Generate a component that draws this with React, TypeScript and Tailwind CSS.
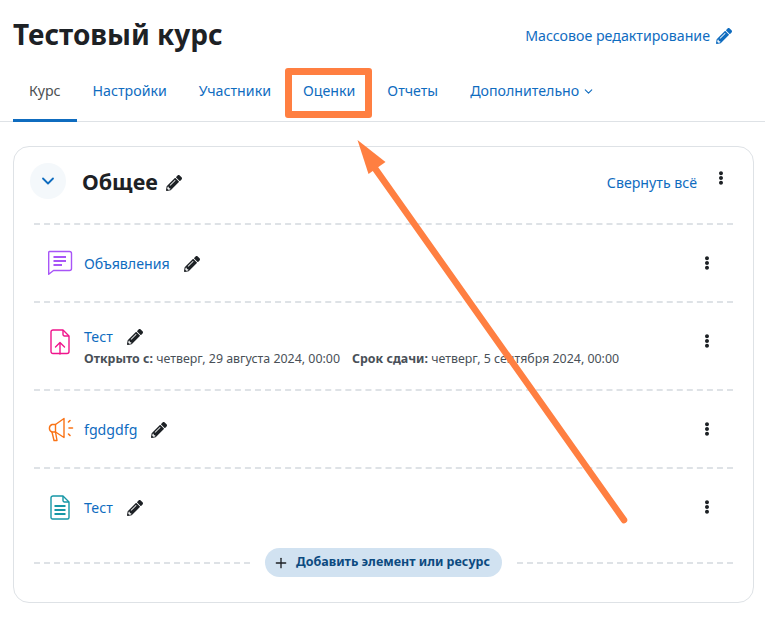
import React from 'react';
import { FaPencilAlt, FaEllipsisV } from 'react-icons/fa';
import { ChevronDown, Plus } from 'lucide-react';

const TABS = ['Настройки', 'Участники', 'Оценки', 'Отчеты'];

const ForumIcon = () => (
  <svg width="26" height="26" viewBox="0 0 26 26" fill="none" stroke="#a855f7" strokeWidth="1.4">
    <path d="M2.500 1.500h20a2 2 0 0 1 2 2v15a2 2 0 0 1-2 2H6.500l-4.800 3.800V2.500a1 1 0 0 1 .8-1z" strokeLinejoin="round" />
    <path d="M6.500 7h12.500M6.500 11h12.500M6.500 15h8.500" strokeWidth="2" />
  </svg>
);

const AssignIcon = () => (
  <svg width="20" height="26" viewBox="0 0 20 26" fill="none" stroke="#f0148c" strokeWidth="1.4" strokeLinejoin="round">
    <path d="M3 1h10l6 6v15.500a2 2 0 0 1-2 2H3a2 2 0 0 1-2-2V3a2 2 0 0 1 2-2z" />
    <path d="M13 1v4.500a1.500 1.500 0 0 0 1.500 1.500H19" />
    <path d="M10 25v-11M5.500 18l4.500-4.500 4.500 4.500" strokeLinecap="round" />
  </svg>
);

const AnnounceIcon = () => (
  <svg width="28" height="25" viewBox="0 0 28 25" fill="none" stroke="#f97316" strokeWidth="1.4" strokeLinejoin="round" strokeLinecap="round">
    <path d="M6 7.500h3.500L18 1.500v19l-8.500-5.500H6a4 4 0 0 1 0-7.500z" />
    <path d="M9.500 7.500v7.500" />
    <path d="M6 15l2 8.500h3L9.500 15" />
    <path d="M22.500 5l1.500-1.500M23 11h3.500M22.500 17l1.500 1.500" strokeWidth="1.600" />
  </svg>
);

const PageIcon = () => (
  <svg width="20" height="25" viewBox="0 0 20 25" fill="none" stroke="#1697a6" strokeWidth="1.4" strokeLinejoin="round">
    <path d="M3 1h10l6 6v15.500a1.500 1.500 0 0 1-1.500 1.500H2.500A1.500 1.500 0 0 1 1 22.500V3a2 2 0 0 1 2-2z" />
    <path d="M13 1v4.500a1.500 1.500 0 0 0 1.500 1.500H19" />
    <path d="M4.500 11h11M4.500 15h11M4.500 19h11" strokeWidth="1.800" />
  </svg>
);

const ActivityRow = ({
  icon,
  name,
  gap = 'ml-[14px]',
  meta,
  height,
}: {
  icon: React.ReactNode;
  name: string;
  gap?: string;
  meta?: boolean;
  height: string;
}) => (
  <div className={`flex items-center border-t-2 border-dashed border-[#dee2e6] ${height}`}>
    <div className={`w-[50px] shrink-0 flex justify-center translate-x-[1px] ${meta ? '-mt-[8px]' : ''}`}>{icon}</div>
    <div className={`flex-1 ${meta ? 'pt-[2px]' : 'pt-[1px]'}`}>
      <div className="flex items-center">
        <a className="text-[14.200px] leading-[20px] text-[#0f6cbf]">{name}</a>
        <FaPencilAlt size={16} className={`${gap} text-[#1d2125]`} />
      </div>
      {meta && (
        <div className="flex gap-[12px] text-[12.400px] leading-[18px] text-[#495057] mt-[3px]">
          <span><b className="font-bold">Открыто с:</b> четверг, 29 августа 2024, 00:00</span>
          <span><b className="font-bold">Срок сдачи:</b> четверг, 5 сентября 2024, 00:00</span>
        </div>
      )}
    </div>
    <FaEllipsisV size={14} className={`mr-[19px] text-[#1d2125] ${meta ? '-mt-[10px]' : ''}`} />
  </div>
);

export default function App() {
  return (
    <div className="relative w-[765px] h-[617px] overflow-hidden bg-white text-[#1d2125] font-['Noto_Sans','Open_Sans',sans-serif]">
      {/* Title row */}
      <div className="h-[68px] flex items-center justify-between pl-[13px] pr-[33px] pt-[4px]">
        <h1 className="text-[28px] leading-[36px] font-bold -mt-[4px]">Тестовый курс</h1>
        <a className="flex items-center gap-[6px] text-[14.200px] text-[#0f6cbf]">
          Массовое редактирование
          <FaPencilAlt size={16} />
        </a>
      </div>

      {/* Tabs */}
      <div className="h-[54px] flex border-b border-[#dee2e6] pl-[13px]">
        <div className="h-[54px] px-[16px] pb-[5px] flex items-center text-[14.200px] text-[#4d4f52] border-b-[3px] border-[#0f6cbf]">Курс</div>
        {TABS.map(t => (
          <div key={t} className="relative h-[54px] px-[16px] pb-[8px] flex items-center text-[14.200px] text-[#0f6cbf]">
            {t}
            {t === 'Оценки' && (
              <span className="absolute -left-[2px] -right-[1px] top-0 h-[50px] border-[7px] border-[#ff7f41] rounded-[3px]" />
            )}
          </div>
        ))}
        <div className="h-[54px] px-[16px] pb-[8px] flex items-center gap-[3px] text-[14.200px] text-[#0f6cbf]">
          Дополнительно
          <ChevronDown size={13} strokeWidth={2} />
        </div>
      </div>

      {/* Section card */}
      <div className="mt-[24px] mx-[13px] w-[741px] h-[457px] border border-[#dee2e6] rounded-[16px] px-[20px]">
        <div className="h-[76px] pb-[8px] flex items-center">
          <div className="-ml-[4px] w-[36px] h-[36px] rounded-full bg-[#f4f8fb] flex items-center justify-center text-[#0f6cbf]">
            <ChevronDown size={20} strokeWidth={2.200} />
          </div>
          <h2 className="ml-[16px] text-[21.500px] font-bold leading-[26px] pt-[2px]">Общее</h2>
          <FaPencilAlt size={16} className="ml-[8px] mt-[3px]" />
          <a className="ml-auto text-[14.200px] text-[#0f6cbf] pt-[3px]">Свернуть всё</a>
          <FaEllipsisV size={14} className="ml-[17px] mr-[5px] -mt-[6px]" />
        </div>

        <ActivityRow icon={<ForumIcon />} name="Объявления" height="h-[78px]" />
        <ActivityRow icon={<AssignIcon />} name="Тест" height="h-[88px]" meta />
        <ActivityRow icon={<AnnounceIcon />} name="fgdgdfg" height="h-[78px]" />
        <ActivityRow icon={<PageIcon />} name="Тест" height="h-[78px]" />

        {/* Add activity */}
        <div className="flex items-center mt-[3px]">
          <div className="flex-1 border-t-2 border-dashed border-[#dee2e6]" />
          <button className="mx-[15px] h-[29px] w-[237px] rounded-full bg-[#d1e2f1] text-[#0c4a80] flex items-center pl-[8px] gap-[7px] text-[12.500px] font-bold">
            <Plus size={16} strokeWidth={2} className="text-[#1d2125]" />
            Добавить элемент или ресурс
          </button>
          <div className="flex-1 border-t-2 border-dashed border-[#dee2e6]" />
        </div>
      </div>

      {/* Annotation arrow */}
      <svg className="absolute left-0 top-0 pointer-events-none" width="765" height="617" viewBox="0 0 765 617">
        <path d="M624 520L374 167" stroke="#ff7f41" strokeWidth="6.500" strokeLinecap="round" fill="none" />
        <path d="M357.500 140L385.500 162L368.500 174z" fill="#ff7f41" />
      </svg>
    </div>
  );
}
